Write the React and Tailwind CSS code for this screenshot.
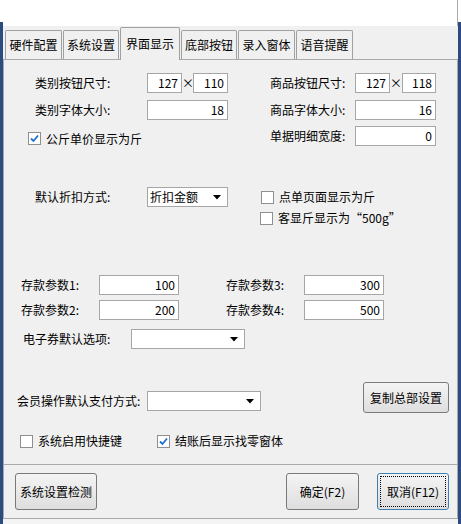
const font = "font-['Noto_Sans_CJK_SC','Noto_Sans',sans-serif]";

const Field = ({ value, w }) => (
  <div
    className={`${w} h-[20px] bg-white border border-[#a6a6a6] flex items-center justify-end pr-[3px] text-[12px] leading-none`}
  >
    {value}
  </div>
);

const Select = ({ value, w }) => (
  <div
    className={`${w} h-[20px] bg-white border border-[#a6a6a6] flex items-center justify-between pl-[2px] pr-[6px] text-[12px] leading-none`}
  >
    <span>{value}</span>
    <svg width="8" height="5" viewBox="0 0 8 5">
      <path d="M0 0 H8 L4 4.5 Z" fill="#000" />
    </svg>
  </div>
);

const Check = ({ checked, label }) => (
  <div className="flex items-center gap-[5px]">
    <div className="w-[13px] h-[13px] bg-white border border-[#8f8f8f] flex items-center justify-center">
      {checked && (
        <svg width="11" height="11" viewBox="0 0 11 11">
          <path d="M2 5.5 L4.5 8 L9 2.5" fill="none" stroke="#1c6fd4" strokeWidth="1.8" />
        </svg>
      )}
    </div>
    <span className="text-[12px] leading-none">{label}</span>
  </div>
);

const Button = ({ children, w, h = 'h-[37px]', focus }) => (
  <div
    className={`${w} ${h} rounded-[3px] border ${
      focus ? 'border-[#3c7fb1]' : 'border-[#7a7a7a]'
    } bg-gradient-to-b from-[#f4f4f4] to-[#dedede] p-[2px]`}
  >
    <div
      className={`w-full h-full flex items-center justify-center text-[12px] leading-none ${
        focus ? 'border border-dotted border-black' : ''
      }`}
    >
      {children}
    </div>
  </div>
);

const tabs = [
  { name: '硬件配置', w: 'w-[57px]' },
  { name: '系统设置', w: 'w-[56px]' },
  { name: '界面显示', w: 'w-[60px]', active: true },
  { name: '底部按钮', w: 'w-[56px]' },
  { name: '录入窗体', w: 'w-[57px]' },
  { name: '语音提醒', w: 'w-[57px]' },
];

export default function App() {
  return (
    <div className={`w-[461px] h-[524px] bg-[#2b4c7e] flex text-black ${font}`}>
      <div className="w-[3px]">
        <div className="h-[22px] bg-white" />
      </div>

      <div className="w-[455px] flex flex-col bg-[#f0f0f0]">
        <div className="h-[26px] bg-white border-r border-[#a9a9a9]" />

        {/* tabs */}
        <div className="h-[33px] flex items-end gap-px pl-[2px] relative z-10">
          {tabs.map((t) =>
            t.active ? (
              <div
                key={t.name}
                className={`${t.w} h-[33px] -mb-px bg-[#f0f0f0] border border-b-0 border-[#a0a0a0] rounded-t-[2px] flex items-center justify-center text-[12px] leading-none`}
              >
                {t.name}
              </div>
            ) : (
              <div
                key={t.name}
                className={`${t.w} h-[29px] border border-b-0 border-[#a0a0a0] rounded-t-[2px] flex items-center justify-center text-[12px] leading-none`}
              >
                {t.name}
              </div>
            )
          )}
        </div>

        {/* panel */}
        <div className="h-[406px] border border-[#a9a9a9] flex flex-col text-[12px] leading-none">
          <div className="mt-[13px] h-[20px] flex items-center">
            <div className="w-[143px] pl-[31px]">类别按钮尺寸:</div>
            <Field value="127" w="w-[35px]" />
            <div className="w-[11px] text-center">×</div>
            <Field value="110" w="w-[35px]" />
            <div className="w-[42px]" />
            <div className="w-[85px]">商品按钮尺寸:</div>
            <Field value="127" w="w-[35px]" />
            <div className="w-[12px] text-center">×</div>
            <Field value="118" w="w-[34px]" />
          </div>

          <div className="mt-[7px] h-[20px] flex items-center">
            <div className="w-[143px] pl-[31px]">类别字体大小:</div>
            <Field value="18" w="w-[81px]" />
            <div className="w-[42px]" />
            <div className="w-[85px]">商品字体大小:</div>
            <Field value="16" w="w-[81px]" />
          </div>

          <div className="mt-[6px] h-[20px] flex items-center">
            <div className="w-[266px] pl-[24px] pt-[5px]">
              <Check checked label="公斤单价显示为斤" />
            </div>
            <div className="w-[85px]">单据明细宽度:</div>
            <Field value="0" w="w-[81px]" />
          </div>

          <div className="mt-[41px] h-[20px] flex items-center">
            <div className="w-[143px] pl-[31px]">默认折扣方式:</div>
            <Select value="折扣金额" w="w-[81px]" />
            <div className="w-[33px]" />
            <Check label="点单页面显示为斤" />
          </div>

          <div className="h-[20px] flex items-center pl-[256px] pt-[2px]">
            <Check label="客显斤显示为“500g”" />
          </div>

          <div className="mt-[48px] h-[20px] flex items-center">
            <div className="w-[95px] pl-[17px]">存款参数1:</div>
            <Field value="100" w="w-[80px]" />
            <div className="w-[47px]" />
            <div className="w-[78px]">存款参数3:</div>
            <Field value="300" w="w-[80px]" />
          </div>

          <div className="mt-[5px] h-[20px] flex items-center">
            <div className="w-[95px] pl-[17px]">存款参数2:</div>
            <Field value="200" w="w-[80px]" />
            <div className="w-[47px]" />
            <div className="w-[78px]">存款参数4:</div>
            <Field value="500" w="w-[80px]" />
          </div>

          <div className="mt-[9px] h-[20px] flex items-center">
            <div className="w-[127px] pl-[19px]">电子券默认选项:</div>
            <Select value="" w="w-[114px]" />
          </div>

          <div className="mt-[33px] flex items-start">
            <div className="w-[143px] pl-[13px] mt-[9px] h-[20px] flex items-center">
              会员操作默认支付方式:
            </div>
            <div className="mt-[9px]">
              <Select value="" w="w-[114px]" />
            </div>
            <div className="w-[102px]" />
            <Button w="w-[86px]" h="h-[31px]">
              复制总部设置
            </Button>
          </div>

          <div className="mt-[18px] h-[20px] flex items-center">
            <div className="w-[153px] pl-[16px]">
              <Check label="系统启用快捷键" />
            </div>
            <Check checked label="结账后显示找零窗体" />
          </div>
        </div>

        {/* bottom buttons */}
        <div className="h-[54px] border-x border-b border-[#a9a9a9] flex items-start pt-[8px]">
          <div className="w-[11px]" />
          <Button w="w-[82px]">系统设置检测</Button>
          <div className="w-[189px]" />
          <Button w="w-[73px]">确定(F2)</Button>
          <div className="w-[18px]" />
          <Button w="w-[72px]" focus>
            取消(F12)
          </Button>
        </div>
        <div className="flex-1 bg-[#f4f4f4]" />
      </div>

      <div className="w-[3px]">
        <div className="h-[22px] bg-white" />
      </div>
    </div>
  );
}
